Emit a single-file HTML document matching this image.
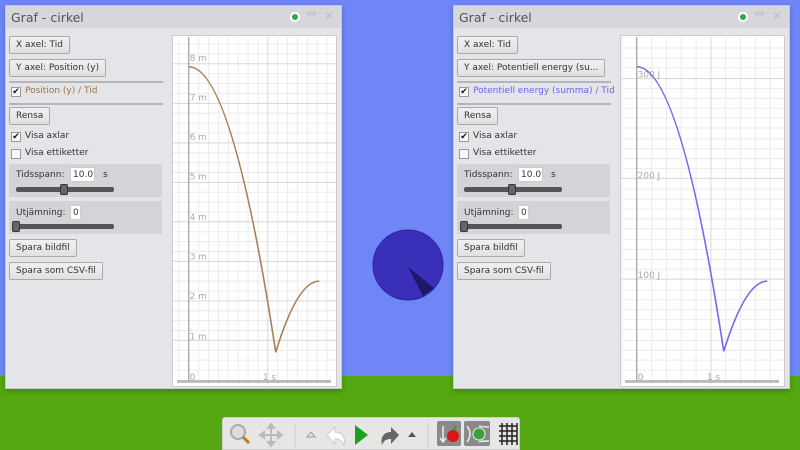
<!DOCTYPE html>
<html><head><meta charset="utf-8">
<style>
*{box-sizing:border-box;margin:0;padding:0}
html,body{width:800px;height:450px;overflow:hidden}
body{position:relative;background:#6f86f6;font-family:"DejaVu Sans","Liberation Sans",sans-serif;font-size:9px;color:#333}
#ground{position:absolute;left:0;top:376px;width:800px;bottom:0;background:#55a812}
.panel{position:absolute;top:5px;width:337px;height:384px;background:#e4e5e8;border:1px solid #c9cacd;box-shadow:0 2px 5px rgba(0,0,0,.25)}
.title{position:absolute;left:0;top:0;width:100%;height:22px;background:#d6d7da;font-size:12.5px;color:#555;padding:4px 0 0 5px}
.dot{position:absolute;top:8px;right:43px;width:6px;height:6px;border-radius:50%;background:#2aa84a;box-shadow:0 0 0 2px #fff}
.min{position:absolute;top:6px;right:25px;width:9px;height:3px;background:#ddd;border:1px solid #bbb}
.x{position:absolute;top:3px;right:7px;font-size:12px;color:#c0c0c0}
.btn{position:absolute;height:18px;border:1px solid #aaa;border-radius:2px;background:linear-gradient(#f1f1f1,#e0e0e0);padding:3px 6px 0 6px;font-size:9px;color:#333;white-space:nowrap}
.sep{position:absolute;left:3px;width:154px;height:2px;background:#b5b6b9}
.cb{position:absolute;left:5px;width:10px;height:10px;border:1px solid #999;background:#fafafa;font-size:9px;line-height:8px;color:#111;text-align:center}
.lbl{position:absolute;font-size:9px;white-space:nowrap}
.grp{position:absolute;left:3px;width:153px;height:33px;background:#d3d4d7}
.inp{position:absolute;height:15px;background:#fff;border:1px solid #ccc;font-size:9px;padding:2px 0 0 2px}
.track{position:absolute;height:5px;background:#555;border-radius:2px}
.knob{position:absolute;width:8px;height:11px;background:#666;border:1px solid #333;border-radius:2px}
.graph{position:absolute;left:166px;top:29px;width:165px;height:352px;background:#fff;border:1px solid #ccc}
#tb{position:absolute;left:222px;top:417px;width:298px;height:33px;background:#e6e7e5;border:1px solid #cfcfcf;border-radius:3px 3px 0 0}
</style></head><body>
<div id="ground"></div>

<svg style="position:absolute;left:0;top:0" width="800" height="450">
<circle cx="408" cy="265" r="35" fill="#3a2fb8" stroke="#30289a" stroke-width="1"/>
<polygon points="408,267 423,296 434,288" fill="#1e1768"/>
</svg>

<div class="panel" style="left:5px">
 <div class="title">Graf - cirkel</div>
 <div class="dot"></div><div class="min"></div><div class="x">✕</div>
 <div class="btn" style="left:3px;top:30px">X axel: Tid</div>
 <div class="btn" style="left:3px;top:53px">Y axel: Position (y)</div>
 <div class="sep" style="top:75px"></div>
 <div class="cb" style="top:81px">✔</div><div class="lbl" style="left:19px;top:80px;color:#9a7448">Position (y) / Tid</div>
 <div class="sep" style="top:97px"></div>
 <div class="btn" style="left:3px;top:101px">Rensa</div>
 <div class="cb" style="top:126px">✔</div><div class="lbl" style="left:19px;top:125px">Visa axlar</div>
 <div class="cb" style="top:143px"></div><div class="lbl" style="left:19px;top:142px">Visa ettiketter</div>
 <div class="grp" style="top:158px"></div>
 <div class="lbl" style="left:10px;top:164px">Tidsspann:</div>
 <div class="inp" style="left:64px;top:161px;width:25px">10.0</div>
 <div class="lbl" style="left:97px;top:164px">s</div>
 <div class="track" style="left:10px;top:181px;width:98px"></div>
 <div class="knob" style="left:54px;top:178px"></div>
 <div class="grp" style="top:195px"></div>
 <div class="lbl" style="left:10px;top:202px">Utjämning:</div>
 <div class="inp" style="left:64px;top:199px;width:11px">0</div>
 <div class="track" style="left:10px;top:218px;width:98px"></div>
 <div class="knob" style="left:6px;top:215px"></div>
 <div class="btn" style="left:3px;top:233px">Spara bildfil</div>
 <div class="btn" style="left:3px;top:256px">Spara som CSV-fil</div>
 <svg class="graph" viewBox="0 0 165 352" width="165" height="352">
  <g stroke="#ececec" stroke-width="1">
   <path d="M6 0V352M26 0V352M36 0V352M46 0V352M56 0V352M66 0V352M76 0V352M86 0V352M106 0V352M116 0V352M126 0V352M136 0V352M146 0V352M156 0V352"/>
   <path d="M0 337H165M0 327H165M0 317H165M0 297H165M0 287H165M0 277H165M0 257H165M0 247H165M0 237H165M0 217H165M0 207H165M0 197H165M0 177H165M0 167H165M0 157H165M0 137H165M0 127H165M0 117H165M0 97H165M0 87H165M0 77H165M0 57H165M0 47H165M0 37H165M0 17H165M0 7H165"/>
  </g>
  <g stroke="#d8d8d8" stroke-width="1">
   <path d="M96 0V352M0 307H165M0 267H165M0 227H165M0 187H165M0 147H165M0 107H165M0 67H165M0 27H165"/>
  </g>
  <path d="M16 0V348M4 348H160" stroke="#888" stroke-width="1" fill="none"/>
  <path d="M4 349H160" stroke="#bbb" stroke-width="2"/>
  <g fill="#aaa" font-size="9" font-family="DejaVu Sans,sans-serif">
   <text x="17" y="24">8 m</text><text x="17" y="64">7 m</text><text x="17" y="104">6 m</text><text x="17" y="144">5 m</text>
   <text x="17" y="185">4 m</text><text x="17" y="225">3 m</text><text x="17" y="265">2 m</text><text x="17" y="306">1 m</text>
   <text x="17" y="347">0</text><text x="91" y="347">1 s</text>
  </g>
  <path d="M16 30 Q60 30 104 319 Q126 247 148 247" stroke="#a57f55" stroke-width="1.6" fill="none"/>
 </svg>
</div>

<div class="panel" style="left:453px">
 <div class="title">Graf - cirkel</div>
 <div class="dot"></div><div class="min"></div><div class="x">✕</div>
 <div class="btn" style="left:3px;top:30px">X axel: Tid</div>
 <div class="btn" style="left:3px;top:53px">Y axel: Potentiell energy (su...</div>
 <div class="sep" style="top:75px"></div>
 <div class="cb" style="top:81px">✔</div><div class="lbl" style="left:19px;top:80px;color:#6f63e8">Potentiell energy (summa) / Tid</div>
 <div class="sep" style="top:97px"></div>
 <div class="btn" style="left:3px;top:101px">Rensa</div>
 <div class="cb" style="top:126px">✔</div><div class="lbl" style="left:19px;top:125px">Visa axlar</div>
 <div class="cb" style="top:143px"></div><div class="lbl" style="left:19px;top:142px">Visa ettiketter</div>
 <div class="grp" style="top:158px"></div>
 <div class="lbl" style="left:10px;top:164px">Tidsspann:</div>
 <div class="inp" style="left:64px;top:161px;width:25px">10.0</div>
 <div class="lbl" style="left:97px;top:164px">s</div>
 <div class="track" style="left:10px;top:181px;width:98px"></div>
 <div class="knob" style="left:54px;top:178px"></div>
 <div class="grp" style="top:195px"></div>
 <div class="lbl" style="left:10px;top:202px">Utjämning:</div>
 <div class="inp" style="left:64px;top:199px;width:11px">0</div>
 <div class="track" style="left:10px;top:218px;width:98px"></div>
 <div class="knob" style="left:6px;top:215px"></div>
 <div class="btn" style="left:3px;top:233px">Spara bildfil</div>
 <div class="btn" style="left:3px;top:256px">Spara som CSV-fil</div>
 <svg class="graph" viewBox="0 0 165 352" width="165" height="352">
  <g stroke="#ececec" stroke-width="1">
   <path d="M1 0V352M31 0V352M46 0V352M61 0V352M76 0V352M106 0V352M121 0V352M136 0V352M151 0V352"/>
   <path d="M0 337H165M0 327H165M0 317H165M0 307H165M0 296H165M0 286H165M0 276H165M0 266H165M0 256H165M0 235H165M0 225H165M0 215H165M0 205H165M0 194H165M0 184H165M0 174H165M0 164H165M0 154H165M0 133H165M0 123H165M0 113H165M0 103H165M0 92H165M0 82H165M0 72H165M0 62H165M0 52H165M0 31H165M0 21H165M0 11H165"/>
  </g>
  <g stroke="#d8d8d8" stroke-width="1">
   <path d="M91 0V352M0 245H165M0 143H165M0 42H165"/>
  </g>
  <path d="M16 0V348M4 348H160" stroke="#888" stroke-width="1" fill="none"/>
  <path d="M4 349H160" stroke="#bbb" stroke-width="2"/>
  <g fill="#aaa" font-size="9" font-family="DejaVu Sans,sans-serif">
   <text x="17" y="41">300 J</text><text x="17" y="143">200 J</text><text x="17" y="244">100 J</text>
   <text x="17" y="347">0</text><text x="87" y="347">1 s</text>
  </g>
  <path d="M16 30 Q60 30 104 318 Q126 247 148 247" stroke="#7067f0" stroke-width="1.6" fill="none"/>
 </svg>
</div>

<div id="tb">
<svg width="298" height="33" viewBox="0 0 298 33">
 <circle cx="15" cy="14" r="7" fill="#ddd" stroke="#aaa" stroke-width="2"/>
 <path d="M20 19L26 25" stroke="#c07a20" stroke-width="3"/>
 <path d="M48 8V26M39 17H57M48 6l-3 4h6zM48 28l-3-4h6zM37 17l4-3v6zM59 17l-4-3v6z" stroke="#bbb" stroke-width="2" fill="#bbb"/>
 <path d="M72 5V30" stroke="#ccc"/>
 <path d="M84 19l4-5 4 5z" fill="none" stroke="#999"/>
 <path d="M104 17l8-8v5c7 0 11 5 9 13c-2-5-5-6-9-6v5z" fill="#fff" stroke="#ccc"/>
 <path d="M132 7v20l13-10z" fill="#1ea01e"/>
 <path d="M176 17l-8-8v5c-7 0-11 5-9 13c2-5 5-6 9-6v5z" fill="#666"/>
 <path d="M185 19l4-5 4 5z" fill="#555"/>
 <path d="M205 5V30" stroke="#ccc"/>
 <rect x="214" y="3" width="24" height="25" rx="2" fill="#8a8a8a"/>
 <path d="M220 8V24M217 20l3 4 3-4" stroke="#eee" stroke-width="1.5" fill="none"/>
 <circle cx="230" cy="18" r="6" fill="#d81818"/>
 <path d="M230 12l3-4" stroke="#2a2" stroke-width="2"/>
 <rect x="241" y="3" width="26" height="25" rx="2" fill="#8a8a8a"/>
 <circle cx="256" cy="16" r="6" fill="#3ca03c" stroke="#eee"/>
 <path d="M244 8q6 8 0 16M266 9q-8 0-10 -1M266 23q-8 0-10 1" stroke="#eee" stroke-width="1.5" fill="none"/>
 <path d="M276 8H294M276 13H294M276 18H294M276 23H294M279 5V27M284 5V27M289 5V27M294 5V27" stroke="#222" stroke-width="1.5"/>
</svg>
</div>
</body></html>
